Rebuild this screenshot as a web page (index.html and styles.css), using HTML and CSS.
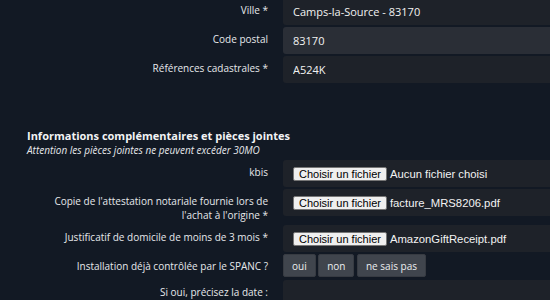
FILE: index.html
```html
<!DOCTYPE html>
<html lang="fr">
<head>
    <meta charset="UTF-8">
    <meta name="viewport" content="width=device-width, initial-scale=1.0">
    <title>Demande de contrôle</title>
    <link rel="stylesheet" href="styles.css">
</head>
<body>
    <form class="form">
        <div class="row">
            <label class="label" for="ville">Ville *</label>
            <input class="field" type="text" id="ville" value="Camps-la-Source - 83170">
        </div>
        <div class="row">
            <label class="label" for="cp">Code postal</label>
            <input class="field hover" type="text" id="cp" value="83170">
        </div>
        <div class="row">
            <label class="label" for="cadastre">Références cadastrales *</label>
            <input class="field" type="text" id="cadastre" value="A524K">
        </div>

        <div class="section">
            <h2>Informations complémentaires et pièces jointes</h2>
            <p class="note">Attention les pièces jointes ne peuvent excéder 30MO</p>
        </div>

        <div class="row">
            <label class="label">kbis</label>
            <div class="field file">
                <span class="file-btn">Choisir un fichier</span>
                <span class="file-name">Aucun fichier choisi</span>
            </div>
        </div>
        <div class="row">
            <label class="label">Copie de l'attestation notariale fournie lors de l'achat à l'origine *</label>
            <div class="field file">
                <span class="file-btn">Choisir un fichier</span>
                <span class="file-name">facture_MRS8206.pdf</span>
            </div>
        </div>
        <div class="row">
            <label class="label">Justificatif de domicile de moins de 3 mois *</label>
            <div class="field file">
                <span class="file-btn">Choisir un fichier</span>
                <span class="file-name">AmazonGiftReceipt.pdf</span>
            </div>
        </div>
        <div class="row">
            <label class="label">Installation déjà contrôlée par le SPANC ?</label>
            <div class="choices">
                <button type="button">oui</button>
                <button type="button">non</button>
                <button type="button">ne sais pas</button>
            </div>
        </div>
        <div class="row">
            <label class="label" for="date">Si oui, précisez la date :</label>
            <input class="field" type="text" id="date">
        </div>
    </form>
</body>
</html>
```

FILE: styles.css
```css
body {
    margin: 0;
    background-color: #121924;
    color: #e6e8eb;
    font-family: "Open Sans", sans-serif;
    overflow: hidden;
}

.form {
    margin-top: -2px;
    padding-left: 27px;
}

.row {
    display: grid;
    grid-template-columns: 241px 1fr;
    column-gap: 15px;
    align-items: start;
    margin-bottom: 2px;
}

.label {
    text-align: right;
    font-size: 10px;
    line-height: 14px;
    padding: 5px 0 1px;
}

.field {
    box-sizing: border-box;
    height: 27px;
    width: 100%;
    padding: 0 10px;
    border: none;
    border-radius: 3px 0 0 3px;
    background-color: #1e2229;
    color: #f2f2f2;
    font-family: "Open Sans", sans-serif;
    font-size: 11px;
    outline: none;
}

.field.hover {
    background-color: #2a2e36;
}

.file {
    display: flex;
    align-items: center;
}

.file-btn {
    font-family: "Liberation Sans", Arial, sans-serif;
    font-size: 11px;
    line-height: 12px;
    padding: 0 5px;
    background-color: #efefef;
    color: #000;
    border: 1px solid #767676;
    border-radius: 2px;
    margin-right: 3px;
}

.file-name {
    font-family: "Liberation Sans", Arial, sans-serif;
    font-size: 11.3px;
    color: #f2f2f2;
}

.section {
    padding-top: 43px;
    margin-bottom: 3px;
}

.section h2 {
    margin: 0;
    font-size: 11px;
    line-height: 16px;
    font-weight: 700;
    color: #f2f3f5;
}

.note {
    margin: 0;
    font-size: 10px;
    line-height: 13px;
    font-style: italic;
    color: #e6e8eb;
}

.choices {
    display: flex;
    gap: 2.5px;
    margin-bottom: 1px;
}

.choices button {
    height: 23px;
    padding: 0 8px;
    border: 1px solid #373b42;
    border-radius: 2px;
    background-color: #40454d;
    color: #eceef0;
    font-family: "Open Sans", sans-serif;
    font-size: 10px;
    cursor: pointer;
}

.choices button:hover {
    background-color: #4a4f58;
}
```
